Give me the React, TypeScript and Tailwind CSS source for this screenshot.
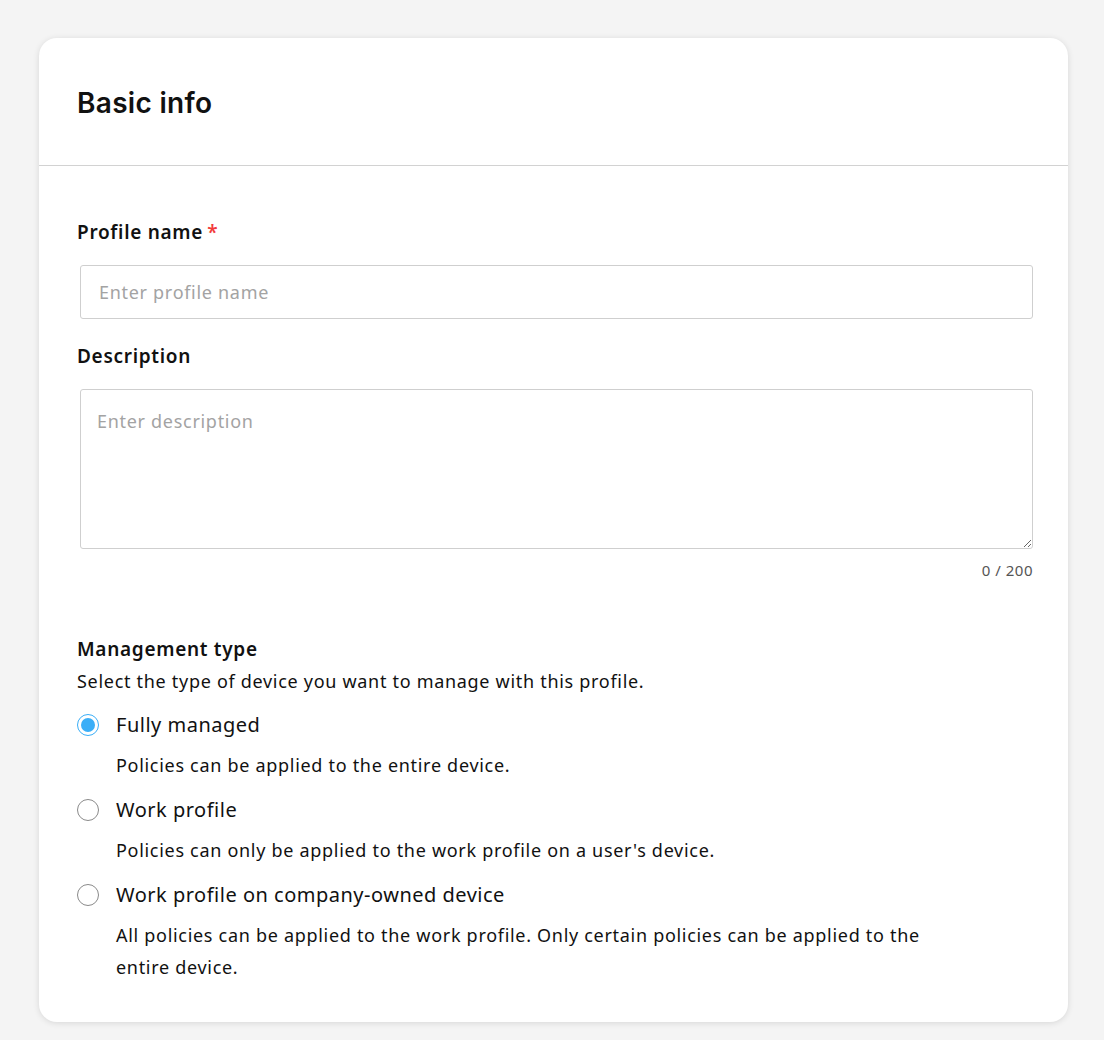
import React, { useState } from "react";

const options = [
  { id: "fully", label: "Fully managed", desc: "Policies can be applied to the entire device." },
  { id: "work", label: "Work profile", desc: "Policies can only be applied to the work profile on a user's device." },
  {
    id: "cope",
    label: "Work profile on company-owned device",
    desc: "All policies can be applied to the work profile. Only certain policies can be applied to the entire device.",
  },
];

const App: React.FC = () => {
  const [type, setType] = useState("fully");
  const [desc, setDesc] = useState("");

  return (
    <div className="min-h-screen bg-[#f4f4f4] px-[39px] pt-[38px] pb-[18px] font-['Noto_Sans',sans-serif] text-[#111]">
      <div className="w-[1029px] rounded-[18px] bg-white shadow-[0_1px_6px_rgba(0,0,0,0.12)]">
        {/* Header */}
        <div className="h-[128px] border-b border-[#d2d2d2] px-[38px] pt-[47px]">
          <h2 className="font-['Inter',sans-serif] text-[28px] font-semibold leading-[36px] tracking-[0.3px]">Basic info</h2>
        </div>

        {/* Body */}
        <div className="px-[38px] pt-[52px] pb-[39px]">
          <label className="flex items-center text-[19px] font-semibold leading-[28px] tracking-[0.7px]">
            Profile name<span className="ml-1 text-[#f23b3b]">*</span>
          </label>
          <input
            className="ml-[3px] mt-[19px] block h-[54px] w-[953px] rounded-[3px] border border-[#cfcfcf] px-[18px] text-[18px] tracking-[0.7px] outline-none placeholder:text-[#a3a3a3]"
            placeholder="Enter profile name"
          />

          <label className="mt-[23px] block text-[19px] font-semibold leading-[28px] tracking-[0.7px]">Description</label>
          <textarea
            className="ml-[3px] mt-[19px] block h-[160px] w-[953px] rounded-[3px] border border-[#cfcfcf] px-[16px] pt-[18px] text-[18px] leading-[26px] tracking-[0.7px] outline-none placeholder:text-[#a3a3a3]"
            placeholder="Enter description"
            maxLength={200}
            value={desc}
            onChange={(e) => setDesc(e.target.value)}
          />
          <div className="ml-[3px] mt-[11px] w-[953px] text-right text-[15px] leading-[20px] tracking-[0.5px] text-[#555]">{desc.length} / 200</div>

          <div className="mt-[55px] text-[19px] font-semibold leading-[28px] tracking-[0.7px]">Management type</div>
          <p className="mt-[5px] text-[18px] leading-[26px] tracking-[0.7px]">Select the type of device you want to manage with this profile.</p>

          <div className="mt-[17px] flex flex-col gap-[15px]">
            {options.map((o) => {
              const checked = type === o.id;
              return (
                <label key={o.id} className="flex cursor-pointer items-start gap-[17px]" onClick={() => setType(o.id)}>
                  <span
                    className={`mt-[3px] flex h-[22px] w-[22px] shrink-0 items-center justify-center rounded-full border ${
                      checked ? "border-[#3aaef7]" : "border-[#8a8a8a]"
                    }`}
                  >
                    {checked && <span className="h-[14px] w-[14px] rounded-full bg-[#3aaef7]" />}
                  </span>
                  <span className="flex flex-col">
                    <span className="text-[20px] leading-[28px] tracking-[0.5px]">{o.label}</span>
                    <span className="mt-[10px] max-w-[820px] text-[18px] leading-[32px] tracking-[0.7px]">{o.desc}</span>
                  </span>
                </label>
              );
            })}
          </div>
        </div>
      </div>
    </div>
  );
};

export default App;
